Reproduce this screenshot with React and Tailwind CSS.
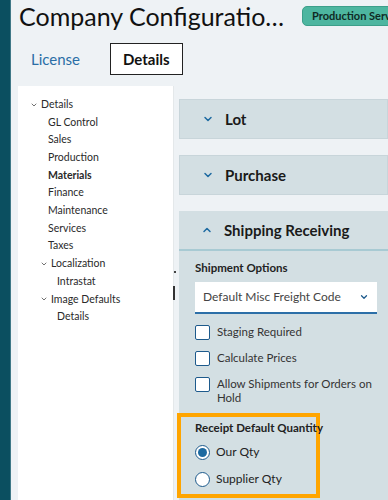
import React from "react";
import { ChevronDown, ChevronUp } from "lucide-react";

const tree = [
  { label: "Details", level: 0, open: true },
  { label: "GL Control", level: 1 },
  { label: "Sales", level: 1 },
  { label: "Production", level: 1 },
  { label: "Materials", level: 1, bold: true },
  { label: "Finance", level: 1 },
  { label: "Maintenance", level: 1 },
  { label: "Services", level: 1 },
  { label: "Taxes", level: 1 },
  { label: "Localization", level: 1, open: true },
  { label: "Intrastat", level: 2 },
  { label: "Image Defaults", level: 1, open: true },
  { label: "Details", level: 2 },
];

function TreeRow({ item }) {
  const pad = item.level === 0 ? "pl-[12px]" : item.level === 1 ? (item.open ? "pl-[22px]" : "pl-[30px]") : "pl-[39px]";
  return (
    <div className={`flex h-[17.7px] items-center gap-[3px] text-[10.5px] text-[#2a2a2a] ${pad} ${item.bold ? "font-bold" : ""}`}>
      {item.open && <ChevronDown className="h-[8px] w-[8px] text-[#555]" strokeWidth={2.5} />}
      <span>{item.label}</span>
    </div>
  );
}

function Checkbox({ label }) {
  return (
    <div className="flex items-start gap-[7px]">
      <span className="h-[15px] w-[15px] shrink-0 rounded-[2px] border-[1.5px] border-[#1d5a8c] bg-white" />
      <span className="w-[160px] text-[11.5px] leading-[14px] text-[#333]">{label}</span>
    </div>
  );
}

function Radio({ label, checked }) {
  return (
    <div className="flex items-center gap-[6px]">
      <span className="flex h-[15px] w-[15px] items-center justify-center rounded-full border-[1.5px] border-[#1d5a8c] bg-white">
        {checked && <span className="h-[9px] w-[9px] rounded-full bg-[#1d6aa1]" />}
      </span>
      <span className="text-[12px] text-[#222]">{label}</span>
    </div>
  );
}

function Header({ title, open }) {
  return (
    <div className={`flex h-[40px] items-center gap-[11px] bg-[#d3dfe3] pl-[22px] ${open ? "border-b-2 border-[#a8cad3]" : "border border-[#c8d5da]"}`}>
      {open ? (
        <ChevronUp className="h-[12px] w-[12px] text-[#1d6aa1]" strokeWidth={3} />
      ) : (
        <ChevronDown className="h-[12px] w-[12px] text-[#1d6aa1]" strokeWidth={3} />
      )}
      <span className="text-[15px] font-bold text-[#1a1a1a]">{title}</span>
    </div>
  );
}

export default function App() {
  return (
    <div className="flex h-[500px] w-[388px] overflow-hidden bg-[#eef2f5]" style={{ fontFamily: 'Lato, "Noto Sans", sans-serif' }}>
      <div className="w-[11px] shrink-0 border-r border-[#3f7887] bg-[#0b4f60]" />
      <div className="flex min-w-0 flex-1 flex-col">
        <div className="flex h-[32px] items-center gap-[18px] whitespace-nowrap pl-[8px]">
          <span className="text-[25px] leading-[30px] text-[#111]">Company Configuratio…</span>
          <span className="rounded-[5px] border border-[#3c9f8a] bg-[#4db6a0] px-[9px] py-[1px] text-[11px] font-bold text-[#0f2a25]">Production Server</span>
        </div>
        <div className="mt-[12px] flex h-[30px] items-center pl-[20px]">
          <span className="text-[15px] text-[#2a6ea6]">License</span>
          <span className="ml-[30px] border border-[#222] bg-white px-[12px] py-[4px] text-[15px] font-bold text-[#111]">Details</span>
        </div>
        <div className="mt-[12px] flex flex-1">
          <div className="relative ml-[7px] w-[156px] shrink-0 border-r border-[#e4e8ea] bg-white pt-[10px]">
            {tree.map((t, i) => (
              <TreeRow key={i} item={t} />
            ))}
            <span className="absolute right-[-3px] top-[185px] h-[2px] w-[2px] bg-[#444]" />
            <span className="absolute right-[-2px] top-[200px] h-[14px] w-[2px] bg-[#333]" />
          </div>
          <div className="ml-[5px] flex min-w-0 flex-1 flex-col pt-[13px]">
            <Header title="Lot" />
            <div className="h-[16px]" />
            <Header title="Purchase" />
            <div className="h-[16px]" />
            <Header title="Shipping Receiving" open />
            <div className="flex-1 bg-[#d3dfe3] pl-[16px] pr-[11px] pt-[8px]">
              <div className="text-[11.5px] font-bold text-[#222]">Shipment Options</div>
              <div className="mt-[6px] flex h-[32px] items-center justify-between border-b-2 border-[#2c6fa8] bg-white pl-[8px] pr-[8px]">
                <span className="text-[12px] text-[#444]">Default Misc Freight Code</span>
                <ChevronDown className="h-[10px] w-[10px] text-[#1d5a8c]" strokeWidth={3} />
              </div>
              <div className="mt-[11px] flex flex-col gap-[11px]">
                <Checkbox label="Staging Required" />
                <Checkbox label="Calculate Prices" />
                <Checkbox label="Allow Shipments for Orders on Hold" />
              </div>
              <div className="ml-[-18px] mt-[8px] w-[143px] border-[4px] border-[#ffa500] pb-[6px] pl-[14px] pt-[3px]">
                <div className="whitespace-nowrap text-[11.5px] font-bold leading-[16px] text-[#222]">Receipt Default Quantity</div>
                <div className="mt-[7px] flex flex-col gap-[9px]">
                  <Radio label="Our Qty" checked />
                  <Radio label="Supplier Qty" />
                </div>
              </div>
            </div>
          </div>
        </div>
      </div>
    </div>
  );
}
